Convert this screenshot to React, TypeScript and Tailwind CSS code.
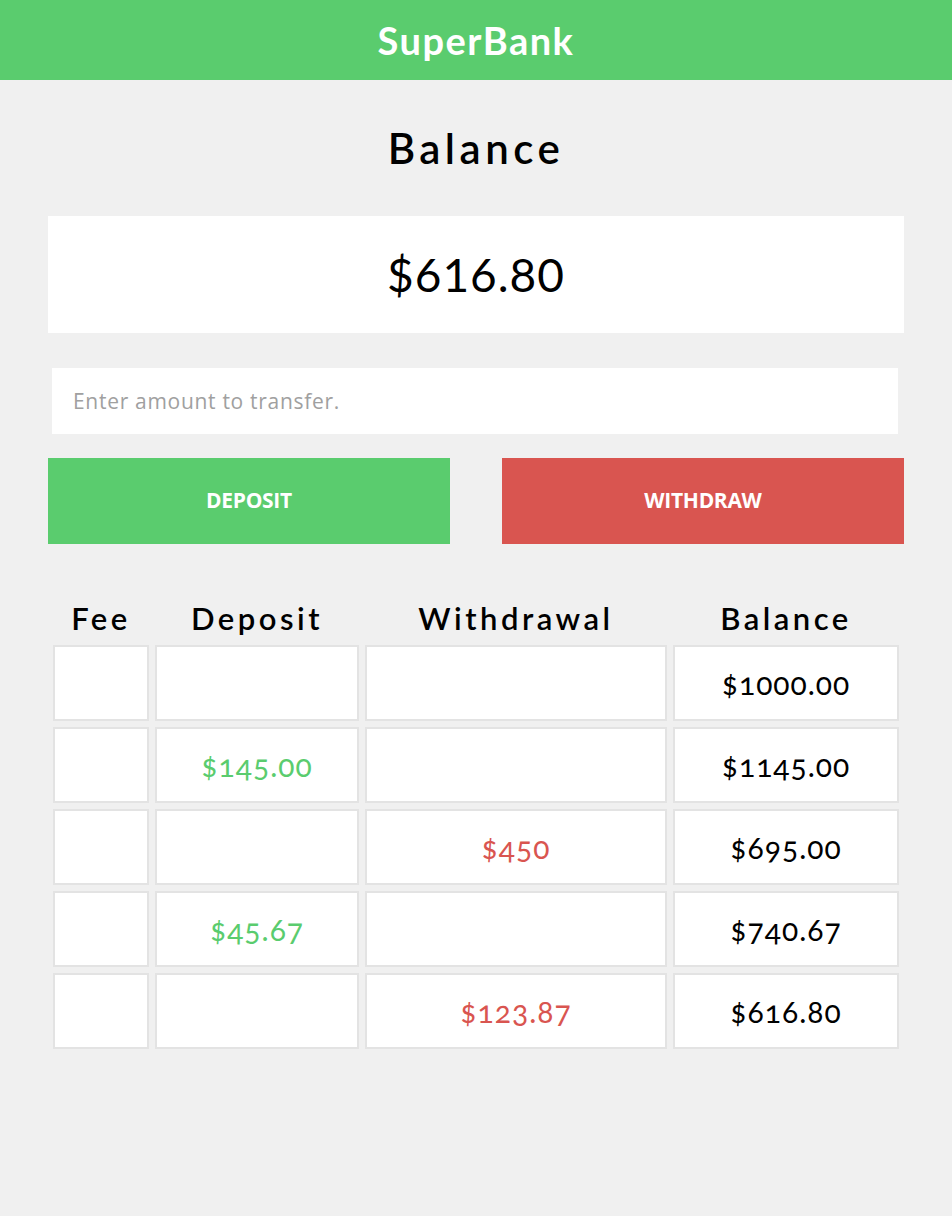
import { useState } from "react";

type Row = { fee: string; deposit: string; withdrawal: string; balance: string };

const rows: Row[] = [
  { fee: "", deposit: "", withdrawal: "", balance: "$1000.00" },
  { fee: "", deposit: "$145.00", withdrawal: "", balance: "$1145.00" },
  { fee: "", deposit: "", withdrawal: "$450", balance: "$695.00" },
  { fee: "", deposit: "$45.67", withdrawal: "", balance: "$740.67" },
  { fee: "", deposit: "", withdrawal: "$123.87", balance: "$616.80" },
];

const cell =
  "h-[76px] bg-white border-2 border-[#e3e3e3] flex items-center justify-center text-[30px] tracking-[1px] oldstyle-nums";

export default function App() {
  const [amount, setAmount] = useState("");
  return (
    <div className="min-h-[1216px] bg-[#f0f0f0] font-['Lato',sans-serif] text-black">
      <header className="h-20 bg-[#5acc6e] flex items-center justify-center">
        <h1 className="text-[38px] font-bold text-white tracking-[1.5px]">SuperBank</h1>
      </header>
      <main className="px-12">
        <div className="h-[136px] flex items-center justify-center">
          <h2 className="text-[42px] font-semibold tracking-[4.5px]">Balance</h2>
        </div>
        <div className="h-[117px] bg-white flex items-center justify-center text-[46px] tracking-[1px]">
          $616.80
        </div>
        <div className="pl-1 pr-[6px] pt-[35px]">
          <input
            value={amount}
            onChange={(e) => setAmount(e.target.value)}
            placeholder="Enter amount to transfer."
            className="w-full h-[66px] bg-white px-[21px] text-[21px] tracking-[0.7px] font-['Open_Sans',sans-serif] placeholder:text-[#a0a0a0] outline-none"
          />
        </div>
        <div className="flex justify-between pt-6">
          <button className="w-[402px] h-[86px] bg-[#5acc6e] text-white text-[21px] font-bold font-['Open_Sans',sans-serif] tracking-[-0.3px]">
            DEPOSIT
          </button>
          <button className="w-[402px] h-[86px] bg-[#d95550] text-white text-[21px] font-bold font-['Open_Sans',sans-serif] tracking-[-0.3px]">
            WITHDRAW
          </button>
        </div>
        <div className="mt-[51px] pl-[5px] grid grid-cols-[96px_204px_302px_226px] gap-[6px]">
          {["Fee", "Deposit", "Withdrawal", "Balance"].map((h) => (
            <div
              key={h}
              className="h-[44px] flex items-end justify-center text-[31px] font-semibold tracking-[3.5px] leading-none pb-[5px]"
            >
              {h}
            </div>
          ))}
          {rows.map((r, i) => (
            <div key={i} className="contents">
              <div className={cell}>{r.fee}</div>
              <div className={`${cell} text-[#5acc6e]`}>{r.deposit}</div>
              <div className={`${cell} text-[#d95550]`}>{r.withdrawal}</div>
              <div className={cell}>{r.balance}</div>
            </div>
          ))}
        </div>
      </main>
    </div>
  );
}
